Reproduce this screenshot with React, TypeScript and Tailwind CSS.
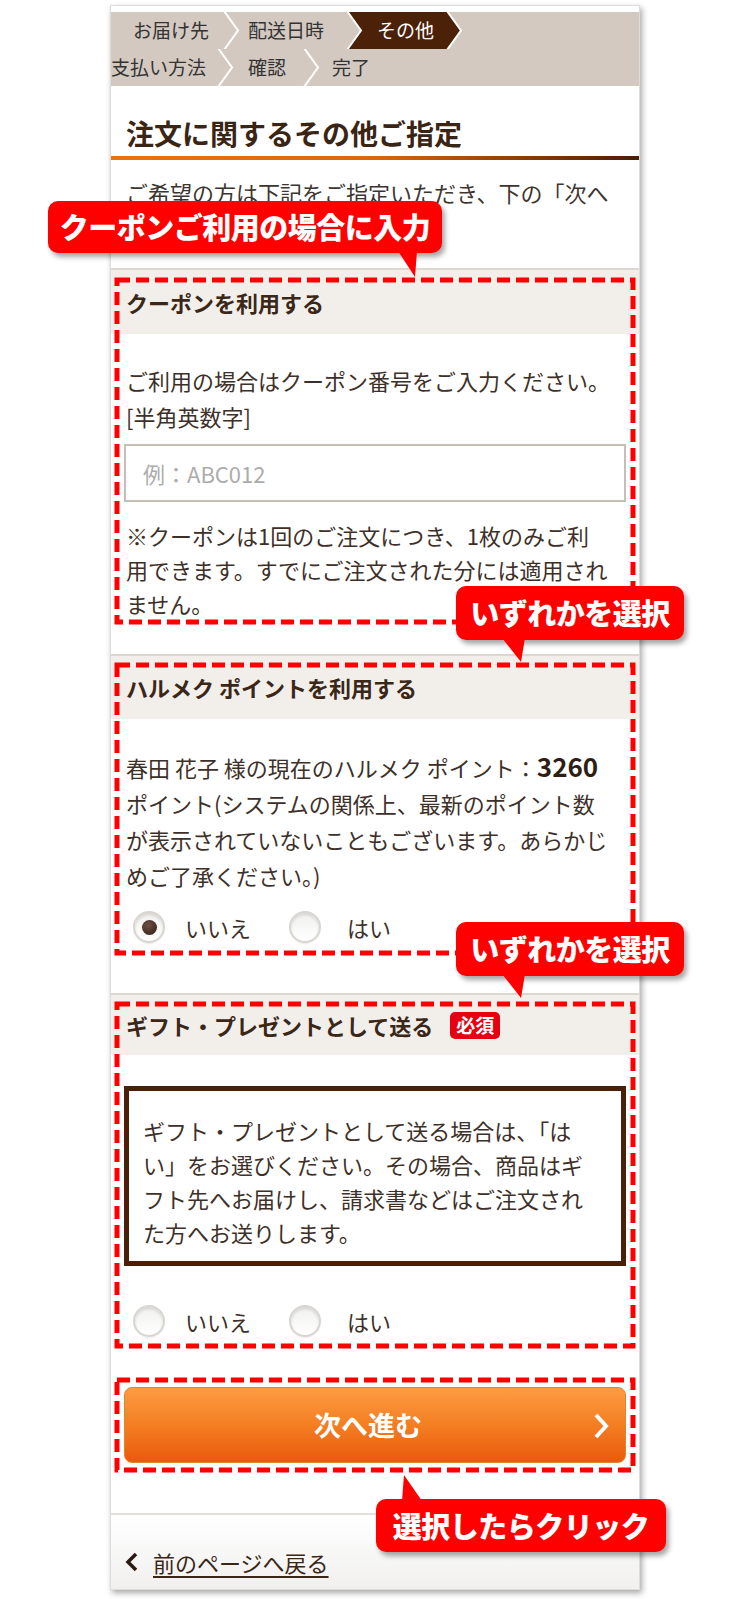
import React from 'react';

// breadcrumb divider: white ">" line, optional fill on either side
const Chevron = ({ left, right }: { left?: string; right?: string }) => (
  <svg width="17" height="37" viewBox="0 0 17 37" className="block shrink-0">
    {left && <polygon points="0,0 1,0 15,18.5 1,37 0,37" fill={left} />}
    {right && <polygon points="1,0 17,0 17,37 1,37 15,18.5" fill={right} />}
    <polyline points="1,-1 15,18.5 1,38" fill="none" stroke="#ffffff" strokeWidth="2" />
  </svg>
);

const Radio = ({ checked }: { checked?: boolean }) => (
  <span className="flex h-[32px] w-[32px] shrink-0 items-center justify-center rounded-full border-2 border-[#d9d5d0] bg-[linear-gradient(to_bottom,#f1f0ef,#ffffff)] shadow-[inset_0_2px_3px_rgba(0,0,0,0.12),0_1px_1px_rgba(0,0,0,0.08)]">
    {checked && (
      <span className="h-[15px] w-[15px] rounded-full bg-[radial-gradient(circle_at_40%_35%,#6e5045,#2e1b14)]" />
    )}
  </span>
);

const RadioRow = ({ yes }: { yes?: boolean }) => (
  <div className="flex h-[32px] items-center pl-[22px] text-[22px] text-[#3d3029]">
    <Radio checked={yes} />
    <span className="ml-[20px] w-[104px]">いいえ</span>
    <Radio />
    <span className="ml-[26px]">はい</span>
  </div>
);

// red dashed annotation frame
const Dashed = ({ className }: { className: string }) => (
  <svg className={`pointer-events-none absolute overflow-visible ${className}`}>
    <rect
      x="0"
      y="0"
      width="100%"
      height="100%"
      fill="none"
      stroke="#ff0000"
      strokeWidth="5"
      strokeDasharray="13 6"
    />
  </svg>
);

const SectionHeader = ({ children }: { children: React.ReactNode }) => (
  <div className="flex items-center bg-[#f2efeb] px-[15px] text-[22px] font-bold text-[#3a2718]">
    {children}
  </div>
);

export default function App() {
  return (
    <div className="relative min-h-[1599px] bg-white pt-[5px] pb-[10px] font-['Noto_Sans_CJK_JP',sans-serif]">
      <div className="mx-auto w-[530px] border border-[#dcdcdc] bg-white pt-[6px] shadow-[2px_3px_6px_rgba(0,0,0,0.35)]">
        {/* steps */}
        <div className="bg-[#d3c9c1] text-[19px] text-[#333333]">
          <div className="flex h-[37px] items-center">
            <div className="w-[112px] pl-[22px]">お届け先</div>
            <Chevron />
            <div className="w-[106px] pl-[8px]">配送日時</div>
            <Chevron right="#4b2107" />
            <div className="flex h-full w-[83px] items-center bg-[#4b2107] pl-[14px] text-white">その他</div>
            <Chevron left="#4b2107" />
          </div>
          <div className="flex h-[37px] items-center">
            <div className="w-[106px]">支払い方法</div>
            <Chevron />
            <div className="w-[69px] pl-[14px]">確認</div>
            <Chevron />
            <div className="pl-[12px]">完了</div>
          </div>
        </div>

        <h1 className="px-[15px] pt-[27px] pb-[3px] text-[28px] leading-[40px] font-bold text-[#3a2413]">
          注文に関するその他ご指定
        </h1>
        <div className="h-[4px] bg-[linear-gradient(to_right,#ef7207_0%,#dc670b_50%,#4a1d06_100%)]" />

        <div className="mt-[15px] px-[15px] pb-[25px] text-[22px] leading-[34px] whitespace-nowrap text-[#3d3530]">
          <p>ご希望の方は下記をご指定いただき、下の「次へ</p>
          <p>進む」ボタンを押してください。</p>
        </div>

        {/* coupon */}
        <section className="relative border-t-2 border-[#ddd7d0] pb-[34px]">
          <SectionHeader>
            <span className="flex h-[64px] items-center">クーポンを利用する</span>
          </SectionHeader>
          <div className="px-[13px] pt-[28px] text-[22px] text-[#3d3029]">
            <div className="px-[2px] leading-[36px] whitespace-nowrap">
              <p>ご利用の場合はクーポン番号をご入力ください。</p>
              <p>[半角英数字]</p>
            </div>
            <input
              readOnly
              placeholder="例：ABC012"
              className="mt-[10px] block h-[58px] w-full border-2 border-[#c6bfb8] bg-white pl-[17px] text-[22px] outline-none placeholder:text-[#acacac]"
            />
            <div className="mt-[16px] px-[2px] leading-[34px] whitespace-nowrap">
              <p>※クーポンは1回のご注文につき、1枚のみご利</p>
              <p>用できます。すでにご注文された分には適用され</p>
              <p>ません。</p>
            </div>
          </div>
          <Dashed className="top-[10px] left-[6px] h-[342px] w-[516px]" />
        </section>

        {/* points */}
        <section className="relative border-t-2 border-[#ddd7d0] pb-[50px]">
          <SectionHeader>
            <span className="flex h-[63px] items-center">ハルメク ポイントを利用する</span>
          </SectionHeader>
          <div className="px-[15px] pt-[29px] text-[22px] leading-[36px] whitespace-nowrap text-[#3d3029]">
            <p>
              春田 花子 様の現在のハルメク ポイント：
              <span className="text-[26px] font-bold text-[#2e1e14]">3260</span>
            </p>
            <p>ポイント(システムの関係上、最新のポイント数</p>
            <p>が表示されていないこともございます。あらかじ</p>
            <p>めご了承ください。)</p>
          </div>
          <div className="mt-[18px]">
            <RadioRow yes />
          </div>
          <Dashed className="top-[9px] left-[6px] h-[288px] w-[516px]" />
        </section>

        {/* gift */}
        <section className="relative border-t-2 border-[#ddd7d0] pb-[13px]">
          <SectionHeader>
            <span className="flex h-[60px] items-center">
              ギフト・プレゼントとして送る
              <span className="ml-[17px] flex h-[27px] w-[50px] items-center justify-center rounded-[5px] bg-[#e50012] text-[19px] font-bold text-white">
                必須
              </span>
            </span>
          </SectionHeader>
          <div className="px-[13px] pt-[31px]">
            <div className="border-[5px] border-[#4a2108] px-[14px] pt-[22px] pb-[12px] text-[22px] leading-[34px] whitespace-nowrap text-[#3d3029]">
              <p>ギフト・プレゼントとして送る場合は、「は</p>
              <p>い」をお選びください。その場合、商品はギ</p>
              <p>フト先へお届けし、請求書などはご注文され</p>
              <p>た方へお送りします。</p>
            </div>
          </div>
          <div className="mt-[39px]">
            <RadioRow />
          </div>
          <Dashed className="top-[9px] left-[6px] h-[342px] w-[516px]" />
        </section>

        {/* next button */}
        <div className="relative mt-[27px] px-[13px] pt-[10px] pb-[8px]">
          <button className="relative flex h-[76px] w-full items-center justify-center rounded-[8px] border border-[#e4832c] bg-[linear-gradient(to_bottom,#fd9c42,#f47e22_50%,#ea5a0c)] pr-[14px] text-[27px] font-bold text-white">
            次へ進む
            <svg className="absolute top-[24px] right-[16px]" width="16" height="28" viewBox="0 0 16 28">
              <polyline points="3,3 13,14 3,25" fill="none" stroke="#ffffff" strokeWidth="4" />
            </svg>
          </button>
          <Dashed className="top-[3px] left-[6px] h-[90px] w-[516px]" />
        </div>

        <div className="mt-[42px] border-t-2 border-[#e2dfdb] bg-[linear-gradient(to_bottom,#ffffff,#f1f0ef)] px-[14px] pt-[32px] pb-[12px]">
          <a className="flex items-center text-[22px] leading-[30px] text-[#3a2718]">
            <svg width="14" height="22" viewBox="0 0 14 22" className="mr-[14px]">
              <polyline points="11,3 3,11 11,19" fill="none" stroke="#2b1a10" strokeWidth="3.5" />
            </svg>
            <span className="underline underline-offset-[4px]">前のページへ戻る</span>
          </a>
        </div>
      </div>

      {/* annotation callouts */}
      <div className="absolute top-[201px] left-[48px] flex h-[52px] w-[394px] items-center justify-center rounded-[10px] bg-[#ff0000] shadow-[3px_4px_5px_rgba(0,0,0,0.35)]">
        <span className="text-[29px] font-black tracking-[-0.5px] text-white">クーポンご利用の場合に入力</span>
        <svg className="absolute top-[50px] left-[350px]" width="19" height="26" viewBox="0 0 19 26">
          <polygon points="0,0 19,0 17,26" fill="#ff0000" />
        </svg>
      </div>

      <div className="absolute top-[586px] left-[456px] flex h-[54px] w-[228px] items-center justify-center rounded-[10px] bg-[#ff0000] shadow-[3px_4px_5px_rgba(0,0,0,0.35)]">
        <span className="text-[29px] font-black tracking-[-0.5px] text-white">いずれかを選択</span>
        <svg className="absolute top-[52px] left-[46px]" width="23" height="24" viewBox="0 0 23 24">
          <polygon points="0,0 23,0 19,24" fill="#ff0000" />
        </svg>
      </div>

      <div className="absolute top-[922px] left-[456px] flex h-[54px] w-[228px] items-center justify-center rounded-[10px] bg-[#ff0000] shadow-[3px_4px_5px_rgba(0,0,0,0.35)]">
        <span className="text-[29px] font-black tracking-[-0.5px] text-white">いずれかを選択</span>
        <svg className="absolute top-[52px] left-[46px]" width="23" height="24" viewBox="0 0 23 24">
          <polygon points="0,0 23,0 19,24" fill="#ff0000" />
        </svg>
      </div>

      <div className="absolute top-[1499px] left-[376px] flex h-[53px] w-[290px] items-center justify-center rounded-[10px] bg-[#ff0000] shadow-[3px_4px_5px_rgba(0,0,0,0.35)]">
        <span className="text-[29px] font-black tracking-[-0.5px] text-white">選択したらクリック</span>
        <svg className="absolute top-[-24px] left-[26px]" width="20" height="26" viewBox="0 0 20 26">
          <polygon points="2,0 0,26 20,26" fill="#ff0000" />
        </svg>
      </div>
    </div>
  );
}
